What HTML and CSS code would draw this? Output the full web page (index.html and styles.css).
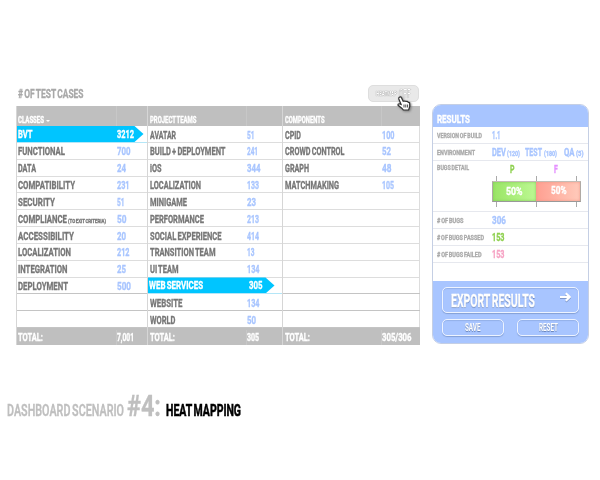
FILE: index.html
```html
<!DOCTYPE html>
<html lang="en">
<head>
<meta charset="utf-8">
<title>Dashboard</title>
<link rel="stylesheet" href="styles.css">
</head>
<body>
<main class="page">
  <section class="cases">
    <header class="cases-head">
      <h1 class="title"><b data-w="65.5"># OF TEST CASES</b></h1>
      <button class="toggle"><b class="toggle-label" data-w="21">HEATMAP</b><b class="toggle-state" data-w="11.5">OFF</b></button>
    </header>
    <div class="table" id="table"></div>
  </section>

  <aside class="results">
    <h2 class="results-title"><b data-w="33">RESULTS</b></h2>
    <div class="info"><span class="key"><b data-w="45">VERSION OF BUILD</b></span><b data-w="8.5">1.1</b></div>
    <div class="info"><span class="key"><b data-w="38">ENVIRONMENT</b></span>
      <div class="envs">
        <span><b data-w="14">DEV</b><b class="note" data-w="13">(120)</b></span>
        <span><b data-w="17">TEST</b><b class="note" data-w="13">(180)</b></span>
        <span><b data-w="10.5">QA</b><b class="note" data-w="7.5">(5)</b></span>
      </div>
    </div>
    <div class="info detail"><span class="key"><b data-w="32">BUGS DETAIL</b></span>
      <div class="chart">
        <div class="chart-labels"><b class="p" data-w="4.5">P</b><b class="f" data-w="3.8">F</b></div>
        <div class="ticks"><i></i><i></i><i></i></div>
        <div class="bar"><span class="pass"><b data-w="16.5">50%</b></span><span class="fail"><b data-w="15.5">50%</b></span></div>
        <div class="ticks"><i></i><i></i><i></i></div>
      </div>
    </div>
    <div class="info"><span class="key"><b data-w="26.5"># OF BUGS</b></span><b data-w="14">306</b></div>
    <div class="info"><span class="key"><b data-w="47"># OF BUGS PASSED</b></span><b class="green" data-w="12.5">153</b></div>
    <div class="info"><span class="key"><b data-w="44.5"># OF BUGS FAILED</b></span><b class="pink" data-w="12.5">153</b></div>
    <div class="actions">
      <button class="export"><b data-w="84">EXPORT RESULTS</b>
        <svg class="arrow" viewBox="0 0 11 10" width="11" height="10"><path d="M0 5H9M5.8 1.3L9.6 5L5.8 8.7" fill="none" stroke="#fff" stroke-width="2.2"/></svg>
      </button>
      <div class="pair">
        <button><b data-w="15.5">SAVE</b></button>
        <button><b data-w="19">RESET</b></button>
      </div>
    </div>
  </aside>
</main>
<svg class="cursor" viewBox="0 0 14 16" width="14" height="16"><path d="M2.3 1.2Q3.8.3 4.6 1.9L6.2 5.3L7.5 5L9 5.4L10.3 5.3L11.4 6.4L12.6 6.8L12.8 10.3L11.6 14H6.3L4.8 12.2L1.1 9.3Q.7 7.8 2.3 7.8L4.1 8.5L1.8 3Q1.5 1.9 2.3 1.2Z" fill="#fff" stroke="#333" stroke-width="1.2"/><path d="M7 8.5V11.5M8.8 8.5V11.5M10.6 8.5V11.5" stroke="#333" stroke-width=".9"/></svg>
<footer class="caption">
  <b class="scenario" data-w="117">DASHBOARD SCENARIO</b>
  <b class="number" data-w="34">#4:</b>
  <b class="name" data-w="75">HEAT MAPPING</b>
</footer>
<script src="main.js"></script>
</body>
</html>
```

FILE: styles.css
```css
* { box-sizing: border-box; }
body {
  margin: 0;
  width: 600px;
  height: 480px;
  overflow: hidden;
  background: #fff;
  font-family: Roboto, "Liberation Sans", sans-serif;
  font-size: 11.6px;
  line-height: 1;
}
b {
  display: inline-block;
  flex: none;
  font-weight: 700;
  white-space: nowrap;
  word-spacing: -0.09em;
  transform-origin: left center;
  -webkit-text-stroke: 0.35px currentColor;
}
h1, h2 { margin: 0; font-size: inherit; }
button {
  display: flex;
  align-items: center;
  padding: 0;
  font: inherit;
  line-height: 1;
}
.page {
  display: flex;
  align-items: flex-start;
  gap: 12px;
  padding: 84px 0 0 16px;
  height: 386px;
}
.cases { width: 404px; }
.cases-head {
  display: flex;
  justify-content: space-between;
  height: 22px;
  padding: 1px 1px 0 2px;
}
.title { color: #a8a8a8; font-size: 12.8px; padding-top: 3px; }
.toggle {
  width: 51px;
  height: 17px;
  padding-left: 7px;
  gap: 2px;
  border: 1px solid #dedede;
  border-radius: 5px;
  background: #e9e9e9;
  color: #fff;
  text-shadow: 0 0 1px #777, 0 0 1px #999;
}
.toggle b { -webkit-text-stroke: 0; }
.toggle-label { font-size: 6.5px; padding-top: 1px; }
.toggle-state { font-size: 12px; font-weight: 400; }

.table {
  display: grid;
  grid-template-columns: 131px 135px 138px;
  grid-template-rows: 239px;
  height: 239px;
  border-right: 1px solid #ddd;
}
.group {
  display: grid;
  grid-template-rows: 20px repeat(12, minmax(0, 1fr)) 17px;
  border-left: 1px solid #d6d6d6;
  color: #777;
}
.row {
  display: flex;
  align-items: center;
  padding: 3px 0 0 1px;
  border-bottom: 1px solid #ddd;
}
.row.deep { border-bottom-color: #c4c4c4; }
.label { display: flex; align-items: center; width: 99px; height: 100%; }
.group:nth-child(2) .label,
.group:nth-child(3) .label { width: 97px; }
.group:nth-child(n+2) .row { padding-left: 1.5px; }
.count { color: #a8c5ff; }
.small { font-size: 6px; margin-left: 1px; padding-top: 2px; }
.row.head, .row.total { background: #bfbfbf; color: #fff; border: 0; }
.row.head { font-size: 8.3px; padding-top: 9px; }
.row.total { padding-top: 2px; }
.head .label, .total .label { border-right: 1px solid #c7c7c7; }
.head .label { height: 20px; margin-top: -9px; padding-top: 9px; }
.total .count { color: #fff; font-size: 10px; }
.caret {
  margin-left: 2px;
  border: 2.5px solid transparent;
  border-top-color: #fff;
  border-bottom: 0;
}
.group .row.active { padding: 0; border-bottom-color: #b4e6f7; }
.flag {
  display: flex;
  align-items: center;
  width: 127px;
  height: 16px;
  margin-left: -0.5px;
  padding: 1px 0 0 1.5px;
  background: #00c5ff;
  color: #fff;
  clip-path: polygon(0 0, 118px 0, 127px 50%, 118px 100%, 0 100%);
}
.flag .count { color: #fff; }
.group:nth-child(2) .flag .label { width: 100px; }

.results {
  display: flex;
  flex-direction: column;
  width: 157px;
  height: 240px;
  margin-top: 20px;
  border: 1px solid #c5cfe4;
  border-radius: 9px;
  overflow: hidden;
  background: #fff;
  color: #a8c5ff;
}
.results-title {
  height: 22px;
  padding: 9px 0 0 4px;
  background: #a8c5ff;
  color: #fff;
  font-size: 11px;
}
.info {
  display: flex;
  align-items: center;
  height: 17px;
  padding-left: 3.5px;
  padding-top: 2px;
  border-bottom: 1px solid #e6e8ee;
}
.key { width: 55px; font-size: 7.2px; color: #ababab; }
.envs { display: flex; gap: 5px; }
.envs span:last-child { margin-left: 2px; }
.envs span { display: flex; align-items: center; gap: 1.5px; }
.note { font-size: 7.5px; padding-top: 2px; }
.detail { height: 51px; align-items: flex-start; padding-top: 1px; }
.detail .key { padding-top: 2px; }
.chart { width: 89px; }
.chart-labels { display: flex; gap: 40px; padding: 2px 0 0 18px; height: 14px; }
.p { color: #8ed04f; }
.f { color: #e58fff; }
.ticks { display: flex; justify-content: space-between; height: 5px; padding: 0 4px; }
.ticks i { width: 1px; background: #aaa; }
.bar {
  display: flex;
  height: 21px;
  border: 1px solid #b0aaa5;
  border-color: #c4bdb6 #b0aaa5 #999;
}
.bar span { display: flex; align-items: center; justify-content: center; width: 50%; color: #fff; }
.pass { background: linear-gradient(90deg, #9ae566, #bcf892); box-shadow: inset 0 0 3px #80c95a; }
.fail { background: linear-gradient(90deg, #ff9f91, #ffcbbb); box-shadow: inset 0 0 3px #ed9687; }
.bar .fail { padding-left: 1px; padding-bottom: 1px; }
.green { color: #8ed04f; }
.pink { color: #f6a3c4; }
.actions { margin-top: auto; height: 62.5px; padding: 6px 8px 0 9px; background: #a8c5ff; }
.actions button {
  background: transparent;
  color: #fff;
  border: 1px solid #edf3ff;
  border-radius: 5px;
  box-shadow: 0 1px 1px #839fd5, inset 0 1px 1px #93b0e8;
  text-shadow: 0 1px 1px #6680b5;
}
.actions .export {
  width: 137px;
  height: 26px;
  justify-content: space-between;
  padding: 2px 7px 0 8px;
  font-size: 18px;
}
.arrow { margin-top: -8px; filter: drop-shadow(0 1px 0 #7f97c8); }
.pair { display: flex; justify-content: space-between; width: 137px; margin-top: 6px; }
.actions .pair button { width: 62px; height: 17px; justify-content: center; padding-top: 1px; }
.pair b { -webkit-text-stroke: 0; }

.cursor {
  position: absolute;
  left: 397px;
  top: 96px;
  filter: drop-shadow(1px 1px 1px #777);
}
.caption { display: flex; align-items: baseline; padding: 6px 0 0 7px; font-size: 17px; }
.scenario { color: #bfbfbf; font-weight: 600; }
.number { color: #bfbfbf; font-size: 29px; margin-left: 2.5px; }
.name { color: #000; margin-left: 5px; -webkit-text-stroke: 0.6px #000; }
```

FILE: main.js
```js
// Each row: [label, label width, count, count width, optional note]
const groups = [
  {
    head: ["CLASSES", 26], caret: true, active: 0, total: ["7,001", 17],
    rows: [["BVT", 14.5, "3212", 17], ["FUNCTIONAL", 47, "700", 13.5], ["DATA", 18, "24", 9],
      ["COMPATIBILITY", 57, "231", 12.5], ["SECURITY", 37, "51", 7.5],
      ["COMPLIANCE", 49, "50", 9.5, "(TO EXIT CRITERIA)"], ["ACCESSIBILITY", 56, "20", 9],
      ["LOCALIZATION", 53, "212", 12.5], ["INTEGRATION", 49.5, "25", 9], ["DEPLOYMENT", 50, "500", 14]]
  },
  {
    head: ["PROJECT TEAMS", 46.5], active: 9, total: ["305", 12],
    rows: [["AVATAR", 26, "51", 7.5], ["BUILD + DEPLOYMENT", 75.5, "241", 11], ["iOS", 11.5, "344", 13.5],
      ["LOCALIZATION", 51, "133", 12], ["MINIGAME", 37, "23", 9], ["PERFORMANCE", 54, "213", 12],
      ["SOCIAL EXPERIENCE", 71.5, "414", 12], ["TRANSITION TEAM", 65.5, "13", 7.5],
      ["UI TEAM", 28.5, "134", 12.5], ["WEB SERVICES", 54, "305", 13.5],
      ["WEBSITE", 32.5, "134", 12.5], ["WORLD", 25.5, "50", 9]]
  },
  {
    head: ["COMPONENTS", 39.5], active: -1, total: ["305/306", 29.5],
    rows: [["CPID", 16, "100", 12.5], ["CROWD CONTROL", 59.5, "52", 9], ["GRAPH", 24, "48", 9.5],
      ["MATCHMAKING", 54, "105", 12]]
  }
];

const text = (s, w, cls = "") => `<b class="${cls}" data-w="${w}">${s}</b>`;

function row(r, i, active) {
  const deep = i >= 9 ? " deep" : "";
  if (!r) return `<div class="row${deep}"></div>`;
  const note = r[4] ? text(r[4], 38, "small") : "";
  const cells = `<span class="label">${text(r[0], r[1])}${note}</span>${text(r[2], r[3], "count")}`;
  return i === active
    ? `<div class="row active"><div class="flag">${cells}</div></div>`
    : `<div class="row${deep}">${cells}</div>`;
}

document.getElementById("table").innerHTML = groups.map(g => `<div class="group">
  <div class="row head"><span class="label">${text(g.head[0], g.head[1])}${g.caret ? '<i class="caret"></i>' : ""}</span></div>
  ${Array.from({ length: 12 }, (_, i) => row(g.rows[i], i, g.active)).join("")}
  <div class="row total"><span class="label">${text("TOTAL:", 25)}</span>${text(g.total[0], g.total[1], "count")}</div>
</div>`).join("");

// Condense each label horizontally to its set width
document.querySelectorAll("b[data-w]").forEach(el => {
  const natural = el.getBoundingClientRect().width;
  const w = Number(el.dataset.w);
  el.style.width = w + "px";
  el.style.transformOrigin = "0 50%";
  el.style.transform = `scaleX(${w / natural})`;
});
```
